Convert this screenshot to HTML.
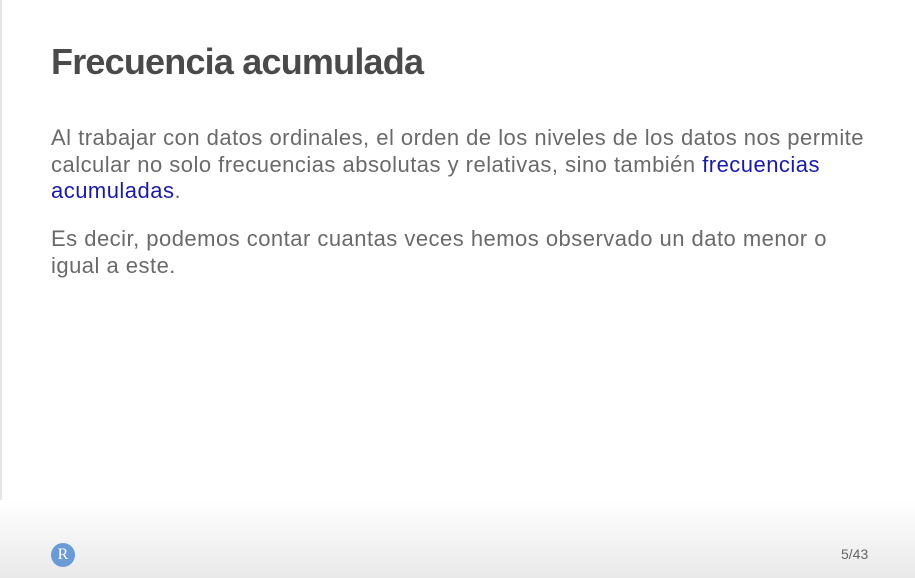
<!DOCTYPE html>
<html><head><meta charset="utf-8"><style>
html,body{margin:0;padding:0;width:915px;height:578px;overflow:hidden;background:#fff}
body{position:relative;font-family:"Liberation Sans",sans-serif}
.edge{position:absolute;left:0;top:0;width:2px;height:578px;background:#e6e6e6}
.foot{position:absolute;left:0;right:0;top:500px;height:78px;background:linear-gradient(#fff,#e9e9e9)}
h1{position:absolute;left:51px;top:41px;margin:0;font-size:36px;font-weight:bold;color:#4a4a4a;letter-spacing:-0.8px;white-space:nowrap}
p{position:absolute;left:51px;margin:0;font-size:22px;line-height:26.5px;color:#6a6a6a;width:860px;letter-spacing:0.48px;white-space:nowrap}
a{color:#1a1aa6;text-decoration:none}
.r{position:absolute;left:51px;top:543px;width:24px;height:24px;border-radius:50%;background:#6b9bd6;color:#fff;font-family:"Liberation Serif",serif;font-size:16px;text-align:center;line-height:24px}
.pg{position:absolute;left:841px;top:546px;font-size:14px;color:#666}
</style></head><body>
<div class="edge"></div>
<div class="foot"></div>
<h1>Frecuencia acumulada</h1>
<p style="top:125px">Al trabajar con datos ordinales, el orden de los niveles de los datos nos permite<br>calcular no solo frecuencias absolutas y relativas, sino también <a>frecuencias</a><br><a>acumuladas</a>.</p>
<p style="top:226px">Es decir, podemos contar cuantas veces hemos observado un dato menor o<br>igual a este.</p>
<div class="r">R</div>
<div class="pg">5/43</div>
</body></html>
